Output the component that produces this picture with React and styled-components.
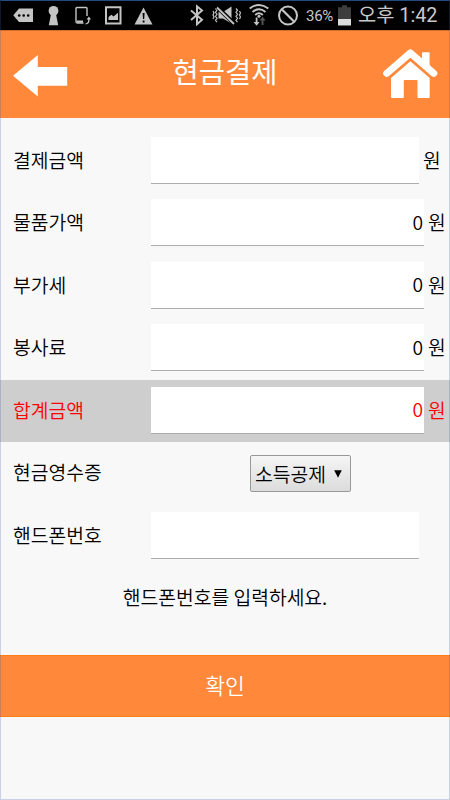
import React, { useState } from "react";
import styled, { createGlobalStyle } from "styled-components";

const ROWS = [
  { id: "pay", label: "결제금액", unit: "원", value: "" },
  { id: "goods", label: "물품가액", unit: "원", value: "0", wide: true },
  { id: "vat", label: "부가세", unit: "원", value: "0", wide: true },
  { id: "service", label: "봉사료", unit: "원", value: "0", wide: true },
  { id: "total", label: "합계금액", unit: "원", value: "0", wide: true, total: true },
];

function StatusBar() {
  return (
    <StyledStatus>
      <Glyph width="20" height="22" viewBox="0 0 20 22">
        <path d="M6 4.5h14v13.5H6L.3 11.3z" />
        <g fill="#000">
          <circle cx="6.2" cy="11.5" r="1.3" />
          <circle cx="10.7" cy="11.5" r="1.3" />
          <circle cx="15.2" cy="11.5" r="1.3" />
        </g>
      </Glyph>
      <Glyph $left={15} width="11" height="22" viewBox="0 0 11 22">
        <circle cx="5.5" cy="6.8" r="4.9" />
        <path d="M3.2 9h4.6l2.4 12.3H.8z" />
      </Glyph>
      <Glyph $left={16} width="16" height="22" viewBox="0 0 16 22">
        <path
          d="M12 12V4.5Q12 3.5 11 3.5H2Q1 3.5 1 4.5V17.5Q1 19 2.5 19H8.5"
          fill="none"
          stroke="#c4c4c4"
          strokeWidth="1.4"
        />
        <path d="M2 16.5h6v2.2H2zM10.5 19.4q2.8-.2 2.8-3.8H11.6l2.3-3 2.2 3h-1.5q0 4.8-4.1 5z" />
      </Glyph>
      <Glyph $left={14} width="17" height="22" viewBox="0 0 17 22">
        <path d="M0 2.2h16.5v18.3H0zM2 4.2v14.3h12.5V4.2z" fillRule="evenodd" />
        <path d="M3.5 16v-3l3-2.2 2 1.7 4.5-3.7V16z" />
      </Glyph>
      <Glyph $left={12} width="19" height="22" viewBox="0 0 19 22">
        <path d="M9.5 3.5 18.5 20.5H.5z" />
        <path d="M8.6 9h2l-.4 6H9zM8.7 16.5h1.8v2H8.7z" fill="#000" />
      </Glyph>

      <Glyph $left={37} width="14" height="22" viewBox="0 0 14 22">
        <path
          d="M1 6.5 12 15.8 7 20.2V2.3L12 6.5 1 16"
          fill="none"
          stroke="#c4c4c4"
          strokeWidth="2"
        />
      </Glyph>
      <Glyph $left={8} width="29" height="22" viewBox="0 0 29 22">
        <path d="M6.5 8h4.5l8.5-5.5v17L11 14.5H6.5z" />
        <path
          d="M3.5 4.5 5 6.3 3.5 8.3 5 10.3 3.5 12.3 5 14.3 3.5 16.3 5 18M1 7l1 2-1 2 1 2-1 2M24 4.5l1.5 1.8L24 8.3l1.5 2-1.5 2 1.5 2-1.5 2 1.5 1.7M27.5 7l1 2-1 2 1 2-1 2"
          fill="none"
          stroke="#c4c4c4"
          strokeWidth="1.2"
        />
        <path d="M5.5 3.5 22.5 20" stroke="#000" strokeWidth="4" />
        <path d="M5 3.5 22 20" stroke="#c4c4c4" strokeWidth="1.8" />
      </Glyph>
      <Glyph $left={8} width="20" height="22" viewBox="0 0 20 22">
        <path
          d="M.7 4.5Q10-2.5 19.3 4.5M3.5 7.9Q10 2.7 16.5 7.9M6.2 11Q10 7.5 13.8 11"
          fill="none"
          stroke="#c4c4c4"
          strokeWidth="1.9"
        />
        <circle cx="10" cy="12.3" r="1.5" />
        <path d="M6.7 13.5h1.8v4.5h2L7.6 21.7 4.6 18h2.1z" />
        <path d="M12.6 21v-4.5h-2.2l3.2-3.8 3.1 3.8h-2.2V21z" fill="#555" />
      </Glyph>
      <Glyph $left={9} width="20" height="22" viewBox="0 0 20 22">
        <circle cx="10" cy="11.5" r="9" fill="none" stroke="#c4c4c4" strokeWidth="2" />
        <path d="M4 5.5 16 17.5" stroke="#c4c4c4" strokeWidth="2.2" />
      </Glyph>
      <Percent>36%</Percent>
      <Glyph $left={4} width="13" height="22" viewBox="0 0 13 22">
        <path d="M4 1.2h5v2h4V21H0V3.2h4z" fill="#3d3d3d" />
        <path d="M0 15h13v6.5H0z" fill="#dcdcdc" />
      </Glyph>
      <Clock>오후 1:42</Clock>
    </StyledStatus>
  );
}

function Field({ row }) {
  const [text, setText] = useState(row.value);

  return (
    <Row $total={row.total}>
      <Label>{row.label}</Label>
      <Input
        type="text"
        aria-label={row.label}
        value={text}
        $wide={row.wide}
        onChange={(e) => setText(e.target.value)}
      />
      {row.unit && <Unit>{row.unit}</Unit>}
    </Row>
  );
}

export default function App() {
  return (
    <Screen>
      <GlobalStyle />
      <StatusBar />
      <Header>
        <IconButton aria-label="back">
          <svg width="55" height="42" viewBox="0 0 55 42" fill="#fff">
            <path d="M0 20.8 24.8 0v12h29.4v18.8H24.8V41.5z" />
          </svg>
        </IconButton>
        <Title>현금결제</Title>
        <IconButton $lift aria-label="home">
          <svg width="55" height="50" viewBox="0 0 55 50" fill="#fff">
            <path
              d="M3.7 24.3 27.4 4 50.8 24.3"
              fill="none"
              stroke="#fff"
              strokeWidth="7"
              strokeLinecap="round"
              strokeLinejoin="round"
            />
            <path d="M39 4.2Q39 3.2 40 3.2h5.6q1 0 1 1V20L39 13.5z" />
            <path d="M27.4 12.2 46.7 29v19q0 1-1 1H35.5q-1 0-1-1V32q0-1-1-1H21.8q-1 0-1 1v16q0 1-1 1H9q-1 0-1-1V29z" />
          </svg>
        </IconButton>
      </Header>
      <Form>
        {ROWS.map((row) => (
          <Field key={row.id} row={row} />
        ))}
        <Row>
          <Label>현금영수증</Label>
          <SelectCell>
            <SelectBox>
              소득공제
              <Caret width="8" height="8" viewBox="0 0 8 8">
                <path d="M.2.3h7.6L4 7.8z" />
              </Caret>
            </SelectBox>
          </SelectCell>
        </Row>
        <Field row={{ label: "핸드폰번호", value: "" }} />
        <Message>핸드폰번호를 입력하세요.</Message>
      </Form>
      <Confirm>확인</Confirm>
      <Frame />
    </Screen>
  );
}

const GlobalStyle = createGlobalStyle`
  * {
    box-sizing: border-box;
  }
  body {
    margin: 0;
    background: #f8f8f8;
  }
  button,
  input {
    font: inherit;
    color: inherit;
  }
`;
const Screen = styled.div`
  position: relative;
  display: flex;
  flex-direction: column;
  width: 450px;
  height: 800px;
  overflow: hidden;
  background: #f8f8f8;
  color: #000;
  font-family: "Noto Sans CJK KR", sans-serif;
  font-size: 19.3px;
  font-weight: 350;
`;
const Frame = styled.div`
  position: absolute;
  inset: 0;
  border: 1px solid rgba(62, 98, 178, 0.25);
  border-top-color: #254a80;
  pointer-events: none;
`;
const StyledStatus = styled.div`
  display: flex;
  align-items: center;
  height: 30px;
  padding: 0 0 0 13px;
  background: #000;
  color: #c8c8c8;
`;
const Glyph = styled.svg`
  flex: none;
  margin-left: ${({ $left }) => $left || 0}px;
  fill: #c4c4c4;
`;
const Percent = styled.span`
  width: 28px;
  margin-left: 8px;
  padding-top: 2px;
  font-family: Roboto, sans-serif;
  font-size: 15px;
  font-weight: 400;
  letter-spacing: -0.3px;
  white-space: nowrap;
`;
const Clock = styled.span`
  margin-left: 7px;
  font-family: Roboto, "Noto Sans CJK KR", sans-serif;
  font-size: 19.8px;
  font-weight: 400;
  line-height: 28px;
  padding-top: 2px;
  white-space: nowrap;
`;
const Header = styled.header`
  display: flex;
  align-items: center;
  justify-content: space-between;
  flex: 0 0 88px;
  padding: 0 12px 0 13px;
  background: #ff883a;
  border-top: 1px solid #d07030;
  color: #fff;
`;
const Title = styled.h1`
  margin: 0 1px 0 0;
  padding-bottom: 7px;
  font-size: 28.5px;
  font-weight: 400;
  line-height: 40px;
`;
const IconButton = styled.button`
  display: flex;
  padding: ${({ $lift }) => ($lift ? "0 0 2px" : "2px 0 0")};
  border: none;
  background: none;
`;
const Form = styled.div`
  flex: 0 0 537px;
  padding-top: 11.6px;
`;
const Row = styled.div`
  display: flex;
  align-items: center;
  height: 62.5px;
  padding-left: 13px;
  background: ${({ $total }) => ($total ? "#cecece" : "transparent")};
  color: ${({ $total }) => ($total ? "#f00" : "#000")};
`;
const Label = styled.label`
  width: 138px;
  line-height: 28px;
  padding-bottom: 2px;
`;
const Input = styled.input`
  width: ${({ $wide }) => ($wide ? 273 : 268)}px;
  height: 47px;
  margin: 0 0 1px;
  padding: 0 1px 1px 0;
  border: none;
  border-bottom: 1px solid #adadad;
  border-radius: 0;
  outline: none;
  background: #fff;
  text-align: right;
`;
const Unit = styled.span`
  margin-left: 4px;
  padding-bottom: 2px;
  line-height: 28px;
`;
const SelectCell = styled.div`
  display: flex;
  justify-content: center;
  flex: 1;
`;
const SelectBox = styled.button`
  display: flex;
  align-items: center;
  justify-content: space-between;
  width: 101px;
  height: 37px;
  padding: 1px 8px 0 4px;
  border: 1px solid #999;
  border-radius: 2px;
  background: linear-gradient(#f5f5f5, #dcdcdc);
  line-height: 28px;
`;
const Caret = styled.svg`
  margin-top: 1px;
  fill: #000;
`;
const Message = styled.p`
  display: flex;
  align-items: center;
  justify-content: center;
  height: 62.5px;
  margin: 0;
  padding-bottom: 2px;
`;
const Confirm = styled.button`
  flex: 0 0 62px;
  padding: 0 0 4px;
  border: 1px solid #ff7d13;
  border-width: 1px 0;
  background: #ff883a;
  color: #fff;
  font-size: 21.5px;
`;
